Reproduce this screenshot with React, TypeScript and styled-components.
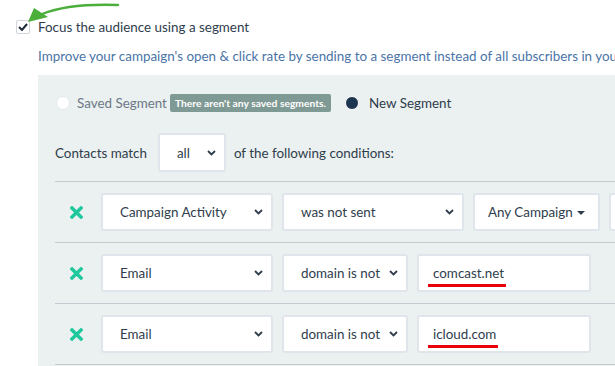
import styled, { createGlobalStyle } from "styled-components";

const GlobalStyle = createGlobalStyle`
    html, body {
        margin: 0;
        padding: 0;
        background: #ffffff;
        font-family: "Lato", "Liberation Sans", sans-serif;
        overflow: hidden;
    }
`;

const Page = styled.div`
    position: relative;
    width: 615px;
    height: 366px;
    overflow: hidden;
    color: #2f3d4c;
    font-size: 13.4px;
`;

const Arrow = styled.svg`
    position: absolute;
    left: 0;
    top: 0;
    pointer-events: none;
`;

const CheckRow = styled.label`
    display: flex;
    align-items: center;
    gap: 8px;
    padding: 20px 0 0 16px;
    line-height: 14px;
`;

const CheckBox = styled.span`
    width: 14px;
    height: 14px;
    box-sizing: border-box;
    border: 1px solid #cfd6dc;
    border-radius: 2px;
    background: #fff;
    display: flex;
    align-items: center;
    justify-content: center;
`;

const Description = styled.p`
    margin: 12px 0 0 38px;
    font-size: 13.4px;
    line-height: 20px;
    color: #4a74a8;
    white-space: nowrap;
`;

const Panel = styled.section`
    margin: 9px 0 0 38px;
    width: 720px;
    height: 320px;
    padding-left: 17px;
    background: #ebf0f0;
    box-sizing: border-box;
    overflow: hidden;
`;

const RadioRow = styled.div`
    display: flex;
    align-items: center;
    height: 20px;
    padding-top: 18px;
`;

const Radio = styled.span<{ $checked?: boolean }>`
    width: 14px;
    height: 14px;
    box-sizing: border-box;
    border-radius: 50%;
    background: ${(p) => (p.$checked ? "#1d3550" : "#ffffff")};
    border: ${(p) => (p.$checked ? "1px solid #ffffff" : "1px solid #e4e9ec")};
    margin-left: ${(p) => (p.$checked ? "14px" : "1px")};
    margin-right: ${(p) => (p.$checked ? "10px" : "7px")};
`;

const RadioLabel = styled.span<{ $muted?: boolean }>`
    color: ${(p) => (p.$muted ? "#6b7886" : "#2f3d4c")};
`;

const Badge = styled.span`
    margin-left: 3px;
    height: 18px;
    padding: 0 5px;
    display: flex;
    align-items: center;
    background: #7f9994;
    color: #ffffff;
    font-size: 10.3px;
    font-weight: 700;
    border-radius: 2px;
`;

const MatchRow = styled.div`
    display: flex;
    align-items: center;
    gap: 8px;
    margin-top: 20px;
`;

const SelectBox = styled.div<{ $w: number }>`
    position: relative;
    width: ${(p) => p.$w}px;
    height: 38px;
    box-sizing: border-box;
    flex: none;
    display: flex;
    align-items: center;
    padding-left: 17px;
    background: #ffffff;
    border: 2px solid #dfe5ea;
    border-radius: 3px;
    color: #2f3d4c;
    white-space: nowrap;
`;

const MatchSelect = styled(SelectBox)`
    height: 39px;
    margin-left: 3px;
`;

const Chevron = styled.svg`
    position: absolute;
    right: 8px;
    top: 50%;
    margin-top: -3px;
`;

const Conditions = styled.div`
    margin-top: 9px;
    border-top: 1px solid #c3cbd1;
`;

const ConditionRow = styled.div`
    display: flex;
    align-items: center;
    gap: 9px;
    padding: 11px 0;
    border-bottom: 1px solid #c3cbd1;
`;

const Remove = styled.svg`
    flex: none;
    margin: 0 9px 0 15px;
`;

const DropButton = styled(SelectBox)`
    padding-left: 13px;
    gap: 4px;
`;

const Caret = styled.svg`
    margin-top: 2px;
`;

const TextInput = styled(SelectBox)`
    padding-left: 14px;
`;

const Marked = styled.span`
    position: relative;
    &::after {
        content: "";
        position: absolute;
        left: -5px;
        right: -2px;
        bottom: -6px;
        height: 3px;
        background: #e8000b;
    }
`;

function Down() {
    return (
        <Chevron width="9" height="6" viewBox="0 0 9 6">
            <polyline points="1,1 4.5,4.5 8,1" fill="none" stroke="#2f3d4c" strokeWidth="1.8" />
        </Chevron>
    );
}

function RemoveIcon() {
    return (
        <Remove width="13" height="13" viewBox="0 0 13 13">
            <path d="M2 2 L11 11 M11 2 L2 11" stroke="#1ec89c" strokeWidth="3.4" strokeLinecap="square" />
        </Remove>
    );
}

interface ICondition {
    field: string;
    op: string;
    opWidth: number;
    value: string;
}

const conditions: ICondition[] = [
    { field: "Email", op: "domain is not", opWidth: 126, value: "comcast.net" },
    { field: "Email", op: "domain is not", opWidth: 126, value: "icloud.com" },
];

function App() {
    return (
        <Page>
            <GlobalStyle />
            <Arrow width="130" height="30" viewBox="0 0 130 30">
                <path d="M118 5 C 90 4, 62 6, 42 14" fill="none" stroke="#4caf3c" strokeWidth="2.4" strokeLinecap="round" />
                <polygon points="28,22 34,8 48,17" fill="#4caf3c" />
            </Arrow>
            <CheckRow>
                <CheckBox>
                    <svg width="10" height="8" viewBox="0 0 10 8">
                        <polyline points="1,4 4,7 9,1" fill="none" stroke="#1d2b3a" strokeWidth="2" />
                    </svg>
                </CheckBox>
                Focus the audience using a segment
            </CheckRow>
            <Description>
                Improve your campaign's open &amp; click rate by sending to a segment instead of all subscribers in your list.
            </Description>
            <Panel>
                <RadioRow>
                    <Radio />
                    <RadioLabel $muted>Saved Segment</RadioLabel>
                    <Badge>There aren't any saved segments.</Badge>
                    <Radio $checked />
                    <RadioLabel>New Segment</RadioLabel>
                </RadioRow>
                <MatchRow>
                    Contacts match
                    <MatchSelect $w={68}>
                        all
                        <Down />
                    </MatchSelect>
                    of the following conditions:
                </MatchRow>
                <Conditions>
                    <ConditionRow>
                        <RemoveIcon />
                        <SelectBox $w={172}>
                            Campaign Activity
                            <Down />
                        </SelectBox>
                        <SelectBox $w={182}>
                            was not sent
                            <Down />
                        </SelectBox>
                        <DropButton $w={127}>
                            Any Campaign
                            <Caret width="8" height="4" viewBox="0 0 8 4">
                                <polygon points="0,0 8,0 4,4" fill="#2f3d4c" />
                            </Caret>
                        </DropButton>
                        <SelectBox $w={120} />
                    </ConditionRow>
                    {conditions.map((c) => (
                        <ConditionRow key={c.value}>
                            <RemoveIcon />
                            <SelectBox $w={172}>
                                {c.field}
                                <Down />
                            </SelectBox>
                            <SelectBox $w={c.opWidth}>
                                {c.op}
                                <Down />
                            </SelectBox>
                            <TextInput $w={174}>
                                <Marked>{c.value}</Marked>
                            </TextInput>
                        </ConditionRow>
                    ))}
                </Conditions>
            </Panel>
        </Page>
    );
}

export default App;
